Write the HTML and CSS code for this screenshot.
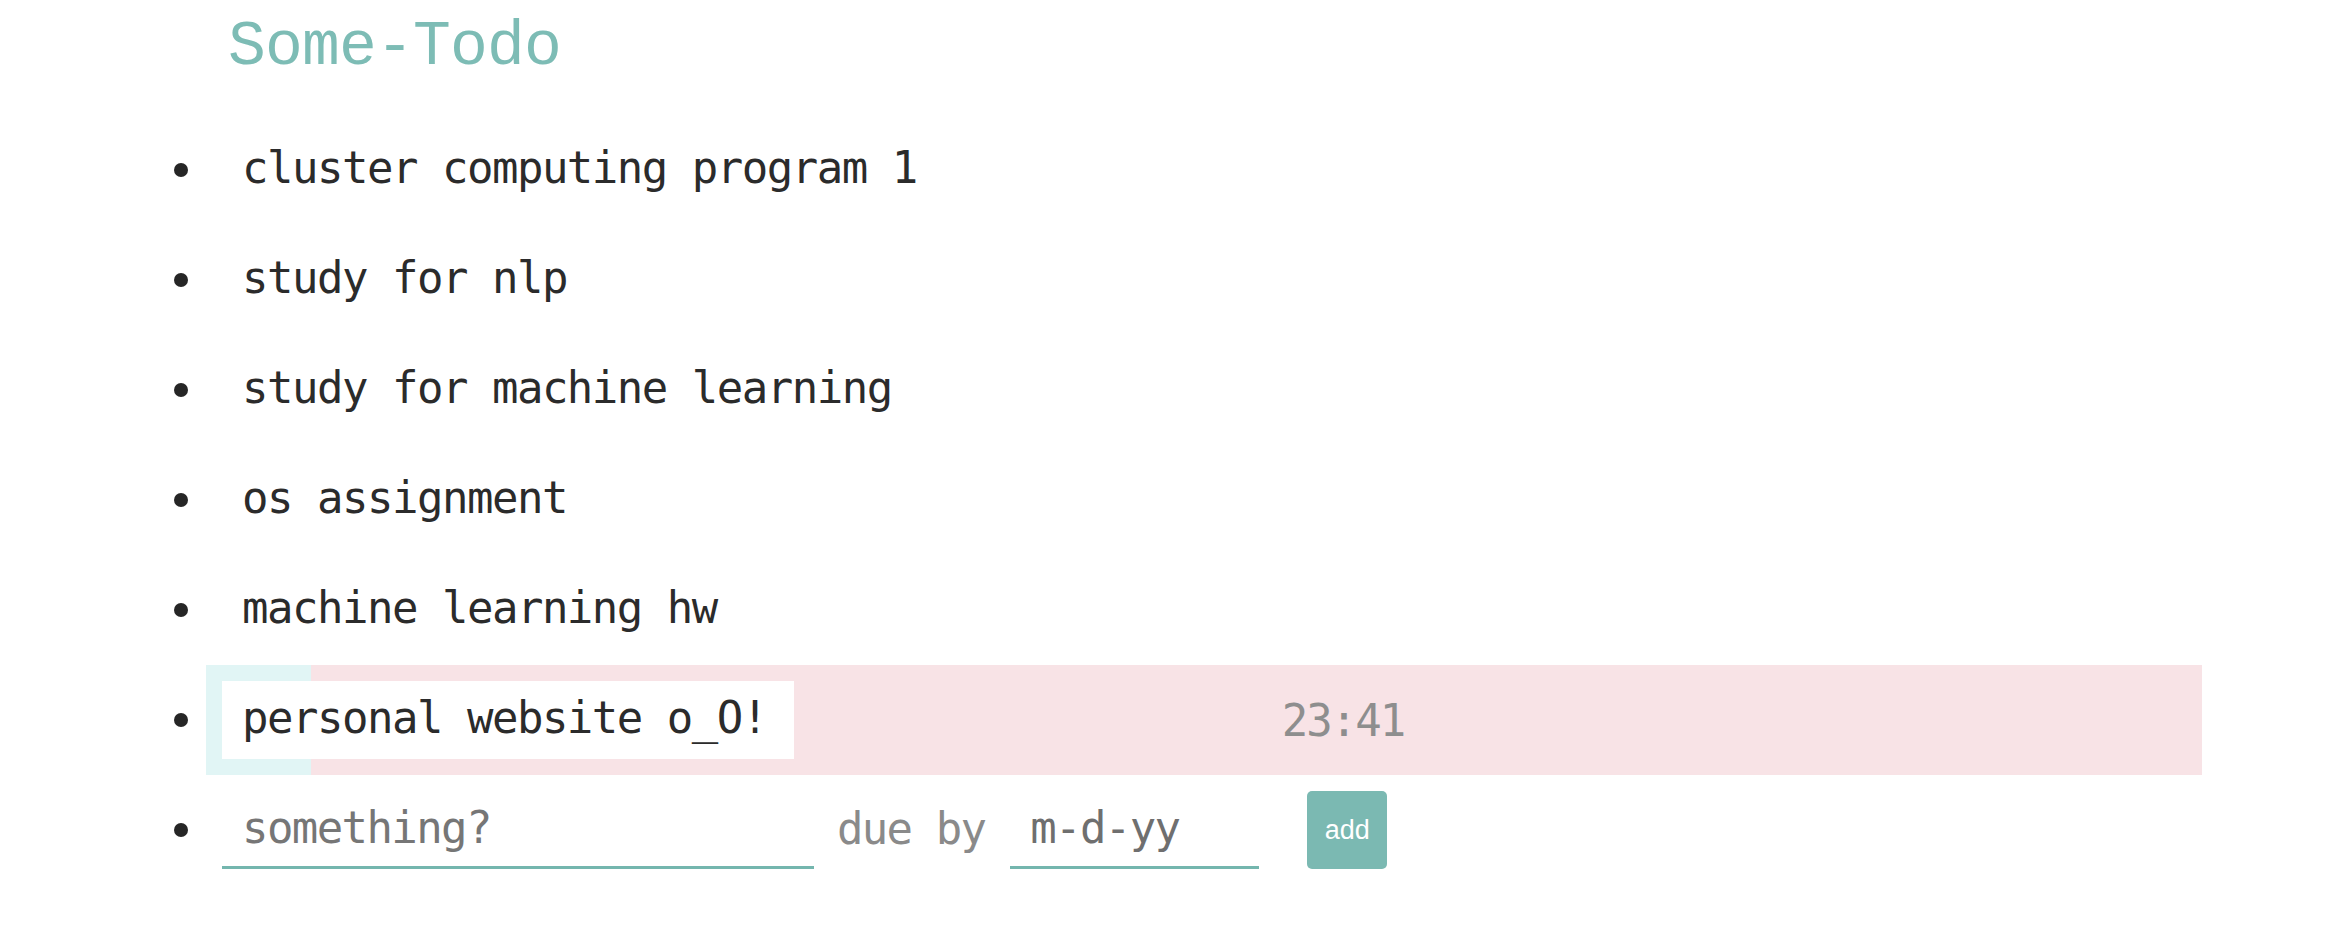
FILE: index.html
```html
<!DOCTYPE html>
<html lang="en">
<head>
<meta charset="utf-8">
<title>Some-Todo</title>
<link rel="stylesheet" href="styles.css">
</head>
<body>
<div class="app">
  <h1 class="title">Some-Todo</h1>
  <ul class="todo-list">
    <li class="todo"><span class="bullet"></span><div class="todo-body"><span class="todo-text">cluster computing program 1</span></div></li>
    <li class="todo"><span class="bullet"></span><div class="todo-body"><span class="todo-text">study for nlp</span></div></li>
    <li class="todo"><span class="bullet"></span><div class="todo-body"><span class="todo-text">study for machine learning</span></div></li>
    <li class="todo"><span class="bullet"></span><div class="todo-body"><span class="todo-text">os assignment</span></div></li>
    <li class="todo"><span class="bullet"></span><div class="todo-body"><span class="todo-text">machine learning hw</span></div></li>
    <li class="todo"><span class="bullet"></span><div class="todo-body todo-body-due"><span class="todo-text todo-text-box">personal website o_O!</span><span class="todo-time">23:41</span></div></li>
    <li class="todo"><span class="bullet"></span>
      <form class="todo-body new-form">
        <input class="field field-task" type="text" placeholder="something?">
        <span class="due-label">due by</span>
        <input class="field field-date" type="text" placeholder="m-d-yy">
        <button class="add-btn" type="button">add</button>
      </form>
    </li>
  </ul>
</div>
</body>
</html>
```

FILE: styles.css
```css
html, body {
  margin: 0;
  padding: 0;
  background: #ffffff;
}

body {
  font-family: "DejaVu Sans Mono", "Liberation Mono", monospace;
  color: #2b2b2b;
}

.title {
  margin: 0;
  padding: 13px 0 0 228px;
  font-family: "Liberation Mono", monospace;
  font-weight: 400;
  font-size: 63px;
  line-height: 70px;
  letter-spacing: -0.8px;
  color: #7dbcb5;
}

.todo-list {
  list-style: none;
  margin: 32px 134px 0 160px;
  padding: 0;
}

.todo {
  display: flex;
  align-items: stretch;
  height: 110px;
}

.bullet {
  flex: none;
  width: 46px;
  box-sizing: border-box;
  padding-left: 14px;
  display: flex;
  align-items: center;
}

.bullet::before {
  content: "";
  width: 14px;
  height: 14px;
  border-radius: 50%;
  background: #262626;
}

.todo-body {
  flex: 1;
  display: flex;
  align-items: center;
  padding: 16px;
  margin: 0;
}

.todo-body-due {
  background: linear-gradient(to right, #e1f5f5 105px, #f8e3e6 105px);
}

.todo-text {
  display: block;
  height: 78px;
  line-height: 73px;
  padding: 0 27px 0 20px;
  font-size: 44px;
  letter-spacing: -1.5px;
  white-space: pre;
}

.todo-text-box {
  background: #ffffff;
}

.todo-time {
  margin-left: 488px;
  font-size: 44px;
  line-height: 73px;
  letter-spacing: -2px;
  color: #8e8e8e;
}

.field {
  height: 78px;
  box-sizing: border-box;
  margin: 0;
  border: 0;
  border-bottom: 3px solid #74b6ae;
  border-radius: 0;
  padding: 0 0 3px 20px;
  font-family: "DejaVu Sans Mono", "Liberation Mono", monospace;
  font-size: 44px;
  letter-spacing: -1.6px;
  color: #2b2b2b;
  background: transparent;
  outline: none;
}

.field::placeholder {
  color: #767676;
  opacity: 1;
}

.field-task {
  width: 592px;
}

.due-label {
  padding: 0 25px 4px 23px;
  font-size: 44px;
  letter-spacing: -1.8px;
  color: #8a8a8a;
}

.field-date {
  width: 249px;
  padding-left: 20px;
}

.field-date::placeholder {
  color: #6f6f6f;
}

.add-btn {
  margin-left: 48px;
  width: 80px;
  height: 78px;
  border: 0;
  border-radius: 5px;
  padding: 0;
  background: #7bb9b2;
  color: #ffffff;
  font-family: "Liberation Sans", Arial, sans-serif;
  font-size: 27px;
  cursor: pointer;
}
```
